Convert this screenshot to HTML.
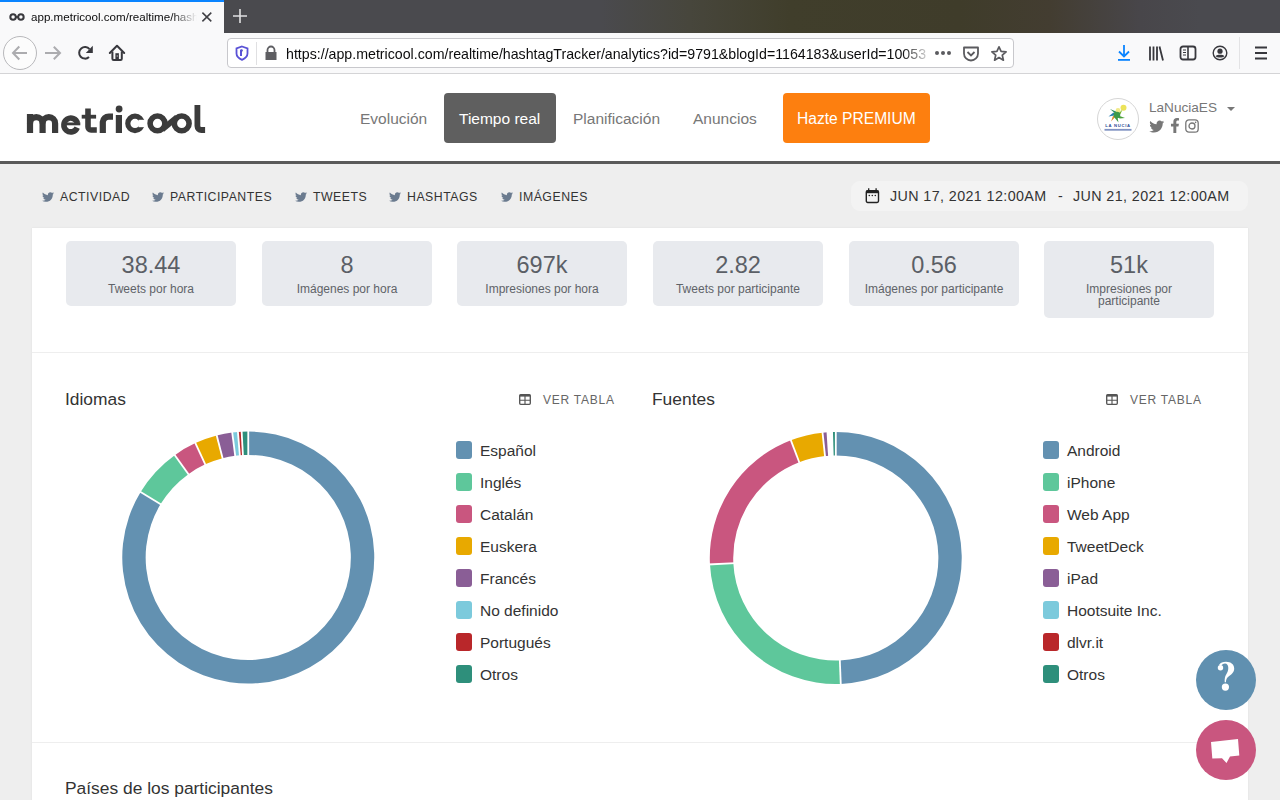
<!DOCTYPE html>
<html><head><meta charset="utf-8">
<style>
*{box-sizing:border-box;margin:0;padding:0}
html,body{width:1280px;height:800px;overflow:hidden;background:#eeeeee;font-family:"Liberation Sans",sans-serif;position:relative}
.abs{position:absolute}
.nw{white-space:nowrap}
#tabbar{left:0;top:0;width:1280px;height:33px;background:linear-gradient(90deg,#4a4a4e 0px,#4a4a4e 600px,#47463c 690px,#403e2b 790px,#3f3c2a 960px,#433d31 1050px,#48464a 1140px,#4a4a4f 1200px)}
#tab{left:0;top:0;width:224px;height:33px;background:#f9f9fa}
#tabline{left:0;top:0;width:224px;height:2px;background:#0a84ff}
#toolbar{left:0;top:33px;width:1280px;height:41px;background:#f9f9fa;border-bottom:1px solid #d4d4d6}
#urlbar{left:227px;top:38px;width:787px;height:30px;background:#fff;border:1px solid #c8c8cc;border-radius:4px}
#page{left:0;top:74px;width:1280px;height:87px;background:#fff}
#hdrline{left:0;top:161px;width:1280px;height:3px;background:#5a5a5a}
.nav{font-size:15.5px;color:#777;top:110px}
.sub{font-size:12.3px;color:#333;letter-spacing:0.5px;top:190px}
#card{left:32px;top:228px;width:1216px;height:600px;background:#fff;box-shadow:0 0 2px rgba(0,0,0,0.07)}
.stat{top:241px;width:170px;height:65px;background:#e8eaee;border-radius:5px;text-align:center;color:#5b5f66}
.stat .v{font-size:23.5px;position:absolute;left:0;right:0;top:10.7px;line-height:26px}
.stat .l{font-size:12px;position:absolute;left:0;right:0;top:41.5px;line-height:12px;color:#5f6368}
.sep{left:32px;width:1216px;height:1px;background:#eeeeee}
.h2{font-size:17.4px;color:#333}
.vt{font-size:12px;color:#666;letter-spacing:0.75px;top:393px}
.lg{font-size:15.5px;color:#333;margin-top:0.5px}
.sq{width:16px;height:18px;border-radius:3px}
</style></head><body>
<!-- tab bar -->
<div id="tabbar" class="abs"></div>
<div id="tab" class="abs"></div>
<div id="tabline" class="abs"></div>
<div class="abs" style="left:9px;top:12.5px;width:16px;height:8px">
<svg style="display:block" width="16" height="8" viewBox="0 0 18 9"><circle cx="4.6" cy="4.5" r="3.1" fill="none" stroke="#38383d" stroke-width="2.3"/><circle cx="13.4" cy="4.5" r="3.1" fill="none" stroke="#38383d" stroke-width="2.3"/><rect x="7" y="3.5" width="4" height="2" fill="#38383d"/></svg></div>
<div class="abs nw" style="left:31px;top:10px;font-size:11.6px;color:#0c0c0d;width:166px;overflow:hidden;-webkit-mask-image:linear-gradient(90deg,#000 85%,transparent)">app.metricool.com/realtime/hashtagTracker</div>
<svg class="abs" style="left:200px;top:10px" width="14" height="14" viewBox="0 0 14 14"><path d="M2.4 2.6L11.3 11.4M11.3 2.6L2.4 11.4" stroke="#404045" stroke-width="1.5"/></svg>
<svg class="abs" style="left:232px;top:8px" width="16" height="16" viewBox="0 0 16 16"><path d="M8 1V15M1 8H15" stroke="#e0e0e2" stroke-width="1.6"/></svg>

<!-- toolbar -->
<div id="toolbar" class="abs"></div>
<svg class="abs" style="left:0;top:33px" width="140" height="40" viewBox="0 0 140 40">
<circle cx="20" cy="20" r="16.5" fill="#fcfcfc" stroke="#b8b8bb" stroke-width="1"/>
<path d="M13 20H27M19.3 13.5L13 20L19.3 26.5" fill="none" stroke="#acacaf" stroke-width="2"/>
<path d="M45 20H60M53.8 13.8L60 20L53.8 26.2" fill="none" stroke="#acacaf" stroke-width="2"/>
<path d="M89 24A5.8 5.8 0 1 1 89.5 16.2" fill="none" stroke="#38383d" stroke-width="2"/><path d="M92.8 12.8V19.9H85.8Z" fill="#38383d"/>
<path d="M109.8 20L117 12.8L124.2 20" fill="none" stroke="#38383d" stroke-width="2" stroke-linejoin="round" stroke-linecap="round"/><path d="M112.4 18.5V25.8Q112.4 27.1 113.7 27.1H120.5Q121.8 27.1 121.8 25.8V18.5" fill="none" stroke="#38383d" stroke-width="2"/><rect x="115.4" y="20.2" width="3.5" height="6.5" fill="#38383d"/><rect x="116.7" y="22.5" width="1" height="1" fill="#f9f9fa"/>
</svg>
<div id="urlbar" class="abs"></div>
<svg class="abs" style="left:234px;top:45px" width="16" height="16" viewBox="0 0 16 16"><path d="M8 1.5L13.5 3.3V8.5C13.5 11.5 11 13.5 8 14.8C5 13.5 2.5 11.5 2.5 8.5V3.3Z" fill="none" stroke="#5a52d6" stroke-width="1.8"/><path d="M8.5 5L7 5.5V11" stroke="#5a52d6" stroke-width="2"/></svg>
<div class="abs" style="left:256px;top:42px;width:1px;height:23px;background:#e0e0e2"></div>
<svg class="abs" style="left:264px;top:45px" width="14" height="16" viewBox="0 0 14 16"><path d="M3.5 7V5A3.5 3.5 0 0 1 10.5 5V7" fill="none" stroke="#5e5e62" stroke-width="1.8"/><rect x="1.5" y="7" width="11" height="8" fill="#5e5e62"/></svg>
<div class="abs nw" style="left:286px;top:46px;font-size:14.2px;color:#0c0c0d;width:646px;overflow:hidden;-webkit-mask-image:linear-gradient(90deg,#000 calc(100% - 30px),transparent 100%)">https://app.metricool.com/realtime/hashtagTracker/analytics?id=9791&amp;blogId=1164183&amp;userId=10053</div>
<svg class="abs" style="left:934px;top:48px" width="18" height="10" viewBox="0 0 18 10"><circle cx="3" cy="5" r="2" fill="#5b5b5f"/><circle cx="9" cy="5" r="2" fill="#5b5b5f"/><circle cx="15" cy="5" r="2" fill="#5b5b5f"/></svg>
<svg class="abs" style="left:962px;top:45px" width="18" height="18" viewBox="0 0 18 18"><path d="M2 2.5H16V8.5A7 7 0 0 1 2 8.5Z" fill="none" stroke="#5b5b5f" stroke-width="1.8" stroke-linejoin="round"/><path d="M5.5 7L9 10.5L12.5 7" fill="none" stroke="#5b5b5f" stroke-width="1.8"/></svg>
<svg class="abs" style="left:990px;top:44.5px" width="18" height="18" viewBox="0 0 18 18"><path d="M9 1.8L11.1 6.4L16.1 6.9L12.3 10.2L13.4 15.2L9 12.6L4.6 15.2L5.7 10.2L1.9 6.9L6.9 6.4Z" fill="none" stroke="#5b5b5f" stroke-width="1.7" stroke-linejoin="round"/></svg>
<svg class="abs" style="left:1115px;top:44px" width="18" height="18" viewBox="0 0 18 18"><path d="M9 1V12M4 7.5L9 12.5L14 7.5" fill="none" stroke="#0a84ff" stroke-width="1.8"/><rect x="3" y="15" width="12" height="1.8" fill="#0a84ff"/></svg>
<svg class="abs" style="left:1147px;top:44px" width="18" height="18" viewBox="0 0 18 18"><path d="M3 2.5V16.5M6.5 2.5V16.5M10 2.5V16.5M12.5 2.5L16 16.5" fill="none" stroke="#38383d" stroke-width="1.8"/></svg>
<svg class="abs" style="left:1179px;top:44px" width="18" height="18" viewBox="0 0 18 18"><rect x="1.5" y="2.5" width="15" height="13" rx="2.5" fill="none" stroke="#38383d" stroke-width="1.8"/><path d="M9 3V15" stroke="#38383d" stroke-width="1.6"/><path d="M4 6H7M4 8.5H7M4 11H7" stroke="#38383d" stroke-width="1"/></svg>
<svg class="abs" style="left:1211px;top:44px" width="18" height="18" viewBox="0 0 18 18"><circle cx="9" cy="9" r="6.8" fill="none" stroke="#38383d" stroke-width="1.4"/><circle cx="9" cy="7.2" r="2.6" fill="#38383d"/><path d="M4.6 12.2C6 10.3 12 10.3 13.4 12.2C12 14 6 14 4.6 12.2Z" fill="#38383d"/></svg>
<div class="abs" style="left:1239px;top:37px;width:1px;height:32px;background:#e3e3e5"></div>
<svg class="abs" style="left:1253px;top:44px" width="16" height="18" viewBox="0 0 16 18"><path d="M2 3.5H14M2 9H14M2 14.5H14" stroke="#38383d" stroke-width="1.8"/></svg>

<!-- page header -->
<div id="page" class="abs"></div>
<div id="hdrline" class="abs"></div>
<svg class="abs" id="logo" style="left:0;top:0" width="220" height="150" viewBox="0 0 220 150"><g fill="none" stroke="#3b3b3b" stroke-width="6.2">
<path d="M30 133V114"/><path d="M30 123.4A6.3 6.3 0 0 1 42.6 123.4V133"/><path d="M42.6 123.4A6.25 6.25 0 0 1 55.1 123.4V133"/>
<path d="M77.5 123.3A6.9 6.9 0 1 0 77.2 127.6" stroke-width="5.6"/>
<path d="M88 108.4V127A3 3 0 0 0 91 130H96.8" stroke-width="5.6"/><path d="M81.7 116.7H96.1" stroke-width="3.8"/>
<path d="M102.8 133V122A6 6 0 0 1 108.8 116.6H113"/>
<path d="M118.9 115V133"/>
<circle cx="135" cy="123.4" r="7.2" stroke-width="5.2"/>
<circle cx="157.5" cy="123.4" r="7.4" stroke-width="5.6"/><circle cx="181.7" cy="123.4" r="7.4" stroke-width="5.6"/><path d="M162.2 129.5L177 117.3" stroke-width="5.8"/>
<path d="M197.4 104.9V126A4 4 0 0 0 201.4 130H205.1" stroke-width="5.8"/>
</g><path d="M63.5 123.9H80.3" stroke="#3b3b3b" stroke-width="2.8"/><circle cx="119.1" cy="109" r="3.4" fill="#3b3b3b"/><rect x="138.5" y="119.8" width="8" height="7.4" fill="#fff"/></svg>
<div class="abs nav nw" style="left:360px">Evolución</div>
<div class="abs" style="left:444px;top:93px;width:112px;height:50px;background:#5f5f5f;border-radius:4px"></div>
<div class="abs nav nw" style="left:459px;color:#fff">Tiempo real</div>
<div class="abs nav nw" style="left:573px">Planificación</div>
<div class="abs nav nw" style="left:693px">Anuncios</div>
<div class="abs" style="left:783px;top:93px;width:147px;height:50px;background:#fd7f0f;border-radius:4px"></div>
<div class="abs nav nw" style="left:797px;color:#fff;font-size:15.6px;top:110px">Hazte PREMIUM</div>
<div class="abs" style="left:1097px;top:98px;width:42px;height:42px;border-radius:50%;border:1px solid #d6d6d6;background:#fff"></div>
<div class="abs nw" style="left:1149px;top:100px;font-size:13.6px;color:#777">LaNuciaES</div>
<svg class="abs" style="left:1226px;top:106px" width="10" height="6" viewBox="0 0 10 6"><path d="M1 1H9L5 5Z" fill="#777"/></svg>

<!-- subnav -->
<div class="abs sub nw" style="left:60px">ACTIVIDAD</div>
<div class="abs sub nw" style="left:170px">PARTICIPANTES</div>
<div class="abs sub nw" style="left:313px">TWEETS</div>
<div class="abs sub nw" style="left:407px">HASHTAGS</div>
<div class="abs sub nw" style="left:519px">IMÁGENES</div>
<div class="abs" style="left:851px;top:181px;width:397px;height:30px;background:#f3f3f3;border-radius:9px"></div>
<div class="abs nw" style="left:890px;top:188px;font-size:14.3px;color:#333;letter-spacing:0.4px">JUN 17, 2021 12:00AM</div><div class="abs nw" style="left:1058px;top:188px;font-size:14.3px;color:#333">-</div><div class="abs nw" style="left:1073px;top:188px;font-size:14.3px;color:#333;letter-spacing:0.4px">JUN 21, 2021 12:00AM</div>

<!-- card -->
<div id="card" class="abs"></div>
<div class="abs stat" style="left:66px"><div class="v">38.44</div><div class="l">Tweets por hora</div></div>
<div class="abs stat" style="left:262px"><div class="v">8</div><div class="l">Imágenes por hora</div></div>
<div class="abs stat" style="left:457px"><div class="v">697k</div><div class="l">Impresiones por hora</div></div>
<div class="abs stat" style="left:653px"><div class="v">2.82</div><div class="l">Tweets por participante</div></div>
<div class="abs stat" style="left:849px"><div class="v">0.56</div><div class="l">Imágenes por participante</div></div>
<div class="abs stat" style="left:1044px;height:77px"><div class="v">51k</div><div class="l">Impresiones por<br>participante</div></div>
<div class="abs sep" style="top:352px"></div>
<div class="abs sep" style="top:742px"></div>

<div class="abs h2 nw" style="left:65px;top:389px">Idiomas</div>
<div class="abs vt nw" style="left:543px">VER TABLA</div>
<div class="abs h2 nw" style="left:652px;top:389px">Fuentes</div>
<div class="abs vt nw" style="left:1130px">VER TABLA</div>
<div class="abs h2 nw" style="left:65px;top:778px">Países de los participantes</div>

<!--DONUT-->
<svg class="abs" style="left:0;top:0" width="1280" height="800" viewBox="0 0 1280 800">
<path d="M248.25 431.50A126 126 0 1 1 140.65 491.95L160.63 504.12A102.6 102.6 0 1 0 248.25 454.90Z" fill="#6391b1"/>
<path d="M140.65 491.95A126 126 0 0 1 174.72 455.18L188.38 474.18A102.6 102.6 0 0 0 160.63 504.12Z" fill="#5ec79b"/>
<path d="M174.72 455.18A126 126 0 0 1 195.40 443.12L205.21 464.36A102.6 102.6 0 0 0 188.38 474.18Z" fill="#c9567f"/>
<path d="M195.40 443.12A126 126 0 0 1 216.70 435.51L222.56 458.17A102.6 102.6 0 0 0 205.21 464.36Z" fill="#e8a900"/>
<path d="M216.70 435.51A126 126 0 0 1 232.24 432.52L235.21 455.73A102.6 102.6 0 0 0 222.56 458.17Z" fill="#8a5e96"/>
<path d="M232.24 432.52A126 126 0 0 1 237.93 431.92L239.84 455.25A102.6 102.6 0 0 0 235.21 455.73Z" fill="#7ccadc"/>
<path d="M237.93 431.92A126 126 0 0 1 241.66 431.67L242.88 455.04A102.6 102.6 0 0 0 239.84 455.25Z" fill="#b9272a"/>
<path d="M241.66 431.67A126 126 0 0 1 248.25 431.50L248.25 454.90A102.6 102.6 0 0 0 242.88 455.04Z" fill="#2e8f7b"/>
<path d="M248.25 456.90L248.25 429.50" stroke="#fff" stroke-width="1.8"/>
<path d="M162.34 505.16L138.94 490.91" stroke="#fff" stroke-width="1.8"/>
<path d="M189.55 475.80L173.56 453.55" stroke="#fff" stroke-width="1.8"/>
<path d="M206.05 466.18L194.56 441.30" stroke="#fff" stroke-width="1.8"/>
<path d="M223.06 460.10L216.20 433.58" stroke="#fff" stroke-width="1.8"/>
<path d="M235.47 457.72L231.99 430.54" stroke="#fff" stroke-width="1.8"/>
<path d="M240.01 457.24L237.76 429.93" stroke="#fff" stroke-width="1.8"/>
<path d="M242.99 457.04L241.55 429.68" stroke="#fff" stroke-width="1.8"/>
<path d="M835.80 432.00A126 126 0 0 1 840.75 683.90L839.83 660.52A102.6 102.6 0 0 0 835.80 455.40Z" fill="#6391b1"/>
<path d="M840.75 683.90A126 126 0 0 1 709.96 564.37L733.33 563.19A102.6 102.6 0 0 0 839.83 660.52Z" fill="#5ec79b"/>
<path d="M709.96 564.37A126 126 0 0 1 790.85 440.29L799.20 462.15A102.6 102.6 0 0 0 733.33 563.19Z" fill="#c9567f"/>
<path d="M790.85 440.29A126 126 0 0 1 822.52 432.70L824.99 455.97A102.6 102.6 0 0 0 799.20 462.15Z" fill="#e8a900"/>
<path d="M822.52 432.70A126 126 0 0 1 827.45 432.28L829.00 455.63A102.6 102.6 0 0 0 824.99 455.97Z" fill="#8a5e96"/>
<path d="M832.06 432.06A126 126 0 0 1 835.80 432.00L835.80 455.40A102.6 102.6 0 0 0 832.76 455.45Z" fill="#2e8f7b"/>
<path d="M835.80 457.40L835.80 430.00" stroke="#fff" stroke-width="1.8"/>
<path d="M839.75 658.52L840.83 685.90" stroke="#fff" stroke-width="1.8"/>
<path d="M735.33 563.09L707.96 564.48" stroke="#fff" stroke-width="1.8"/>
<path d="M799.91 464.02L790.14 438.42" stroke="#fff" stroke-width="1.8"/>
<path d="M825.20 457.96L822.31 430.71" stroke="#fff" stroke-width="1.8"/>
<path d="M829.13 457.62L827.32 430.28" stroke="#fff" stroke-width="1.8"/>
<path d="M832.82 457.44L832.00 430.06" stroke="#fff" stroke-width="1.8"/>
</svg>
<!--/DONUT-->
<!--EXTRA-->
<svg width="0" height="0" style="position:absolute"><defs>
<symbol id="tw" viewBox="0 0 512 512"><path d="M459.37 151.716c.325 4.548.325 9.097.325 13.645 0 138.72-105.583 298.558-298.558 298.558-59.452 0-114.68-17.219-161.137-47.106 8.447.974 16.568 1.299 25.34 1.299 49.055 0 94.213-16.568 130.274-44.832-46.132-.975-84.792-31.188-98.112-72.772 6.498.974 12.995 1.624 19.818 1.624 9.421 0 18.843-1.3 27.614-3.573-48.081-9.747-84.143-51.98-84.143-102.985v-1.299c13.969 7.797 30.214 12.67 47.431 13.319-28.264-18.843-46.781-51.005-46.781-87.391 0-19.492 5.197-37.36 14.294-52.954 51.655 63.675 129.3 105.258 216.365 109.807-1.624-7.797-2.599-15.918-2.599-24.04 0-57.828 46.782-104.934 104.934-104.934 30.213 0 57.502 12.67 76.67 33.137 23.715-4.548 46.456-13.32 66.599-25.34-7.798 24.366-23.064 44.833-43.207 56.854 19.492-2.12 38.36-7.472 55.904-15.02-13.319 19.492-29.888 37.01-48.081 50.005z"/></symbol>
<symbol id="tbl" viewBox="0 0 12 11"><rect x="0.7" y="0.7" width="10.6" height="9.6" rx="1" fill="none" stroke="currentColor" stroke-width="1.35"/><rect x="0.7" y="0.7" width="10.6" height="1.9" fill="currentColor"/><path d="M6 2V10M1 6.2H11" stroke="currentColor" stroke-width="1.15"/></symbol>
</defs></svg>
<svg class="abs" style="left:42px;top:191px;color:#6b7b8f" width="12" height="12"><use href="#tw" fill="#6b7b8f"/></svg>
<svg class="abs" style="left:152px;top:191px" width="12" height="12"><use href="#tw" fill="#6b7b8f"/></svg>
<svg class="abs" style="left:295px;top:191px" width="12" height="12"><use href="#tw" fill="#6b7b8f"/></svg>
<svg class="abs" style="left:389px;top:191px" width="12" height="12"><use href="#tw" fill="#6b7b8f"/></svg>
<svg class="abs" style="left:501px;top:191px" width="12" height="12"><use href="#tw" fill="#6b7b8f"/></svg>
<svg class="abs" style="left:864px;top:187px" width="16" height="17" viewBox="0 0 16 17"><rect x="2.3" y="3.6" width="12.2" height="11.9" rx="1.4" fill="none" stroke="#222" stroke-width="1.4"/><rect x="2.3" y="3.6" width="12.2" height="2.6" fill="#222"/><path d="M4.7 1.3V4.5M12.1 1.3V4.5" stroke="#222" stroke-width="1.3"/><circle cx="5.3" cy="8.5" r="0.8" fill="#222"/><circle cx="8.3" cy="8.5" r="0.8" fill="#222"/><circle cx="11.3" cy="8.5" r="0.8" fill="#222"/></svg>
<svg class="abs" style="left:519px;top:394px;color:#555" width="12" height="11"><use href="#tbl"/></svg>
<svg class="abs" style="left:1106px;top:394px;color:#555" width="12" height="11"><use href="#tbl"/></svg>
<!-- social icons -->
<svg class="abs" style="left:1148.5px;top:118.5px" width="15.5" height="15"><use href="#tw" fill="#777"/></svg>
<svg class="abs" style="left:1170px;top:118px" width="10" height="15" viewBox="0 0 320 512"><path d="M279.14 288l14.22-92.66h-88.91v-60.13c0-25.35 12.42-50.06 52.24-50.06h40.42V6.26S260.43 0 225.36 0c-73.22 0-121.08 44.38-121.08 124.72v70.62H22.89V288h81.39v224h100.17V288z" fill="#777"/></svg>
<svg class="abs" style="left:1185px;top:119px" width="14" height="14" viewBox="0 0 14 14"><rect x="0.8" y="0.8" width="12.4" height="12.4" rx="3.2" fill="none" stroke="#777" stroke-width="1.3"/><circle cx="7" cy="7" r="3" fill="none" stroke="#777" stroke-width="1.3"/><circle cx="10.6" cy="3.4" r="0.8" fill="#777"/></svg>
<!-- avatar logo -->
<svg class="abs" style="left:1097px;top:98px" width="42" height="42" viewBox="0 0 42 42">
<circle cx="26.5" cy="9.8" r="3" fill="#ece35a"/><circle cx="21" cy="12.5" r="2.4" fill="#f1ea8a"/>
<path d="M20 17L13 11L19 13.5Z" fill="#2f8f5b"/><path d="M20 17L11.5 18.5L16.5 14.5Z" fill="#2a7fb0"/><path d="M20 17L14 23.5L16 18Z" fill="#e0892a"/><path d="M20 17L21.5 24.5L17.5 19.5Z" fill="#3b9a40"/><path d="M20 17L28 20L22.5 20.5Z" fill="#4aa03a"/><path d="M20 17L25.5 11.5L23.5 16Z" fill="#7ab52e"/>
<circle cx="20" cy="17" r="3.3" fill="#3f9a48"/>
<text x="21" y="28.6" text-anchor="middle" font-family="Liberation Sans" font-weight="bold" font-size="4.2" letter-spacing="0.7" fill="#2b4a94">LA NUCIA</text>
<rect x="7.5" y="30.9" width="27" height="1.8" fill="#4a64a8" opacity="0.7"/>
</svg>
<!-- legends -->
<div class="abs sq" style="left:456px;top:441px;background:#6391b1"></div><div class="abs lg nw" style="left:480px;top:441px">Español</div>
<div class="abs sq" style="left:456px;top:473px;background:#5ec79b"></div><div class="abs lg nw" style="left:480px;top:473px">Inglés</div>
<div class="abs sq" style="left:456px;top:505px;background:#c9567f"></div><div class="abs lg nw" style="left:480px;top:505px">Catalán</div>
<div class="abs sq" style="left:456px;top:537px;background:#e8a900"></div><div class="abs lg nw" style="left:480px;top:537px">Euskera</div>
<div class="abs sq" style="left:456px;top:569px;background:#8a5e96"></div><div class="abs lg nw" style="left:480px;top:569px">Francés</div>
<div class="abs sq" style="left:456px;top:601px;background:#7ccadc"></div><div class="abs lg nw" style="left:480px;top:601px">No definido</div>
<div class="abs sq" style="left:456px;top:633px;background:#b9272a"></div><div class="abs lg nw" style="left:480px;top:633px">Portugués</div>
<div class="abs sq" style="left:456px;top:665px;background:#2e8f7b"></div><div class="abs lg nw" style="left:480px;top:665px">Otros</div>
<div class="abs sq" style="left:1043px;top:441px;background:#6391b1"></div><div class="abs lg nw" style="left:1067px;top:441px">Android</div>
<div class="abs sq" style="left:1043px;top:473px;background:#5ec79b"></div><div class="abs lg nw" style="left:1067px;top:473px">iPhone</div>
<div class="abs sq" style="left:1043px;top:505px;background:#c9567f"></div><div class="abs lg nw" style="left:1067px;top:505px">Web App</div>
<div class="abs sq" style="left:1043px;top:537px;background:#e8a900"></div><div class="abs lg nw" style="left:1067px;top:537px">TweetDeck</div>
<div class="abs sq" style="left:1043px;top:569px;background:#8a5e96"></div><div class="abs lg nw" style="left:1067px;top:569px">iPad</div>
<div class="abs sq" style="left:1043px;top:601px;background:#7ccadc"></div><div class="abs lg nw" style="left:1067px;top:601px">Hootsuite Inc.</div>
<div class="abs sq" style="left:1043px;top:633px;background:#b9272a"></div><div class="abs lg nw" style="left:1067px;top:633px">dlvr.it</div>
<div class="abs sq" style="left:1043px;top:665px;background:#2e8f7b"></div><div class="abs lg nw" style="left:1067px;top:665px">Otros</div>
<!-- help buttons -->
<div class="abs" style="left:1196px;top:650px;width:60px;height:60px;border-radius:50%;background:#6090b0"></div>
<svg class="abs" style="left:0;top:0" width="1280" height="800" viewBox="0 0 1280 800"><path d="M1219 665C1220.2 662.6 1223 661.8 1226 661.8C1231 661.8 1234.2 664.6 1234.2 668.5C1234.2 672.5 1231.2 674.6 1228.6 676.6C1226.9 678 1226.1 679.6 1225.9 682.2L1224.7 682.2C1224.5 679 1224.9 676.5 1226.2 674.5C1227.4 672.5 1228.3 670.5 1228.3 668C1228.3 665 1227 663.4 1225 663.4C1223.2 663.4 1221.8 664.3 1221.2 665.8Z" fill="#fff"/><circle cx="1220.5" cy="667.8" r="2.7" fill="#fff"/><circle cx="1225.4" cy="687.1" r="3.6" fill="#fff"/></svg>
<div class="abs" style="left:1196px;top:720px;width:60px;height:60px;border-radius:50%;background:#c9567f"></div>
<svg class="abs" style="left:1196px;top:720px" width="60" height="60" viewBox="0 0 60 60"><path d="M15 22L42 19L43.3 35.5L34 36.6L30.5 43L26 38.2L16.3 38.5Z" fill="#fff"/></svg>
<!--/EXTRA-->
</body></html>
